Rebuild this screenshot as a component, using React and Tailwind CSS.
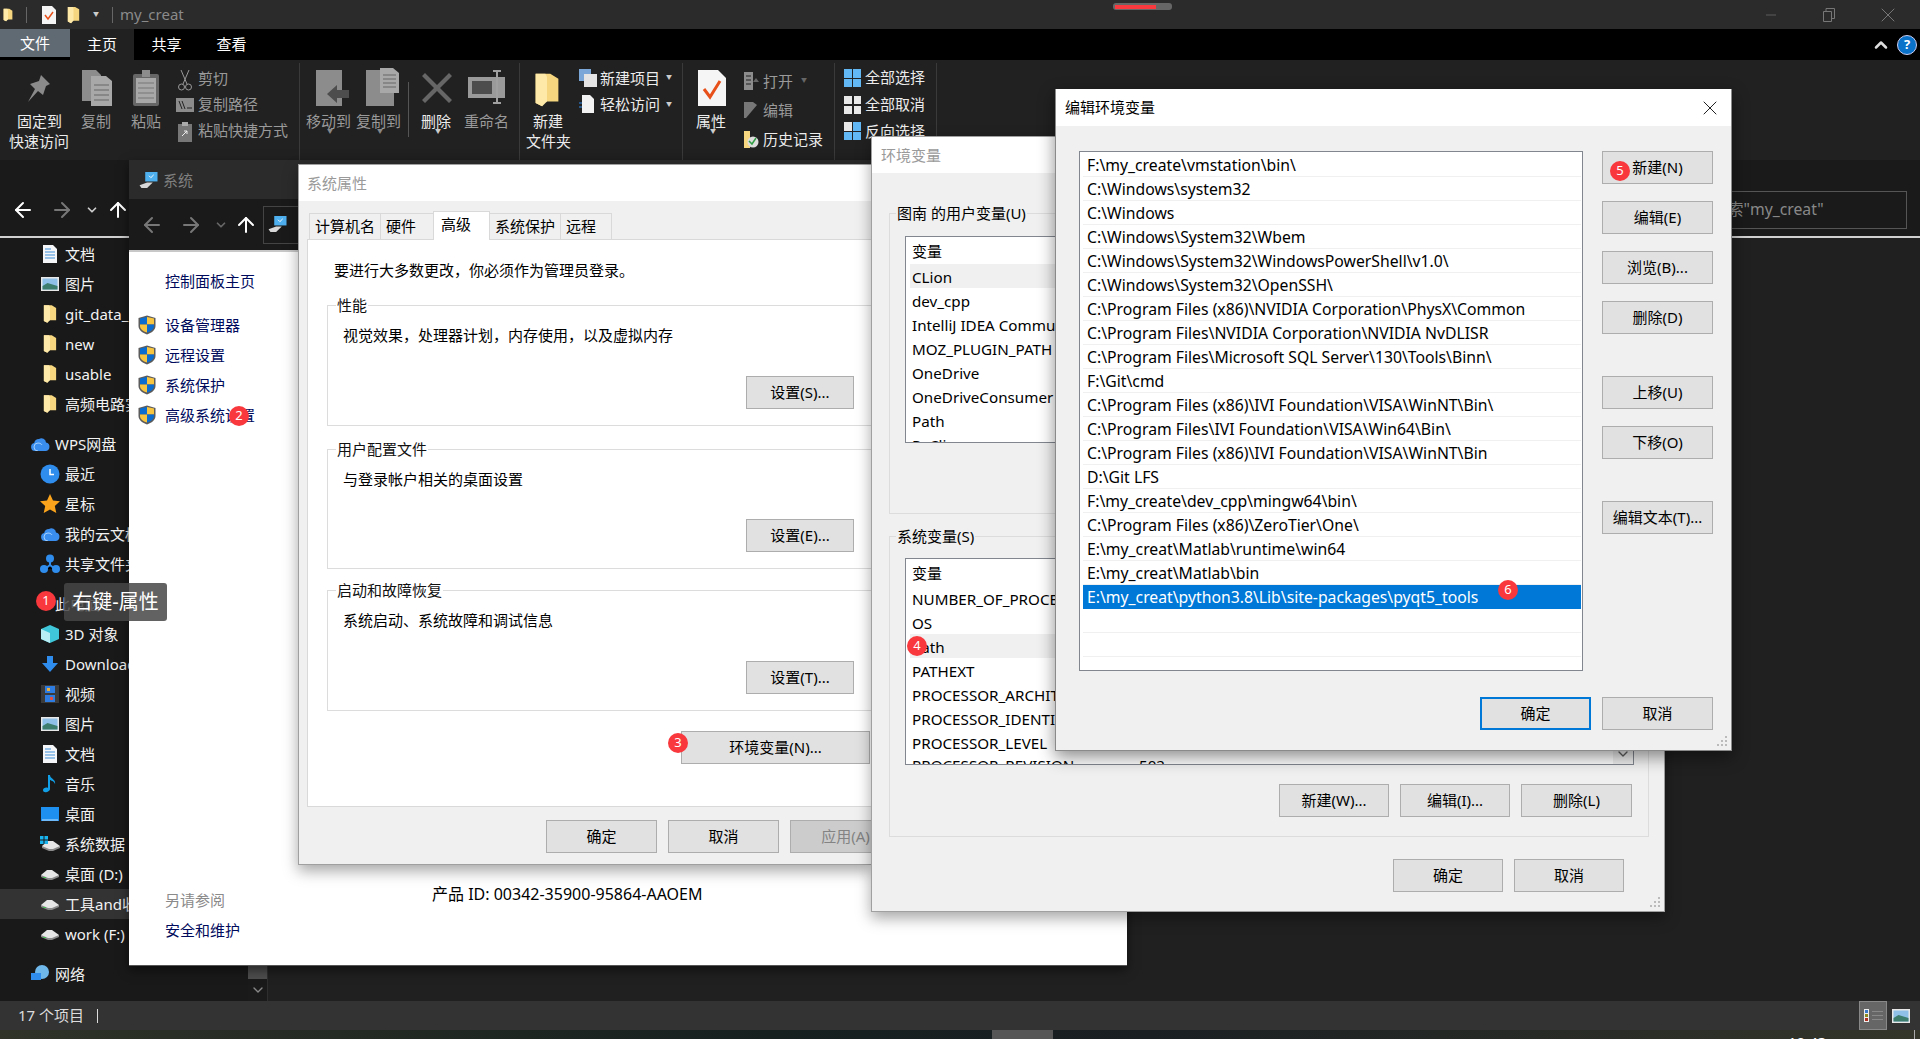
import { ChevronDown, ChevronUp, ArrowLeft, ArrowRight, ArrowUp, X, Minus } from 'lucide-react';

const FONT = '[font-family:"Noto_Sans","Noto_Sans_CJK_SC",sans-serif]';

const Badge = ({ n, className }) => (
  <span className={`absolute z-10 flex h-5 w-5 items-center justify-center rounded-full bg-[#f8383c] text-[13px] text-white ${className}`}>{n}</span>
);

const Folder = ({ className = '' }) => (
  <svg viewBox="0 0 16 22" className={className}>
    <path d="M1 1h9l5 3v14l-9 0-1 3-4-2z" fill="#f6d77f" />
    <path d="M1 1h6l1 2v15l-3 3-4-2z" fill="#ffe9a8" />
  </svg>
);

const Shield = () => (
  <svg viewBox="0 0 18 20" className="h-5 w-[18px] shrink-0">
    <path d="M9 0.5 17.5 3v8c0 4-4 7-8.500 8.500C4.500 18 .5 15 .5 11V3z" fill="#5c5c5c" />
    <path d="M9 2v7.500H2V3.500z" fill="#0a6ccf" />
    <path d="M9 2l7 1.500v6H9z" fill="#f7c540" />
    <path d="M2 9.500h7v8C5 16.500 2 14 2 11z" fill="#f7c540" />
    <path d="M9 9.500h7V11c0 3-3 5.500-7 6.500z" fill="#0a6ccf" />
  </svg>
);

const Drive = () => (
  <svg viewBox="0 0 18 11" className="h-[11px] w-[18px]">
    <path d="M0 6v2l7 3h4l7-3V6z" fill="#8a8a8a" />
    <path d="M0 6l6-5h5l7 5-7 3H7z" fill="#e6e6e6" />
    <path d="M2 8h3v1H2z" fill="#3fb950" />
  </svg>
);

const PathItem = ({ children, selected }) => (
  <div className={`flex h-6 items-center border-b pt-[3px] pl-1 text-[15.75px] whitespace-nowrap ${selected ? 'border-[#0078d7] bg-[#0078d7] text-white' : 'border-[#f0f0f0] text-black'}`}>
    {children}
  </div>
);

const WinButton = ({ children, className = 'w-[111px]', disabled, focused }) => (
  <div className={`flex h-[33px] shrink-0 items-center justify-center text-[15px] ${focused ? 'border-2 border-[#0078d7]' : 'border border-[#adadad]'} ${disabled ? 'bg-[#cccccc] text-[#838383]' : 'bg-[#e1e1e1] text-black'} ${className}`}>
    {children}
  </div>
);

const GroupBox = ({ title, className, children }) => (
  <fieldset className={`w-[600px] border border-[#dcdcdc] px-[15px] ${className}`}>
    <legend className="-ml-[7px] px-[1px] text-[15px] leading-[18px] text-[#111]">{title}</legend>
    {children}
  </fieldset>
);

const RibbonLabel = ({ children, className, dim }) => (
  <span className={`text-[15px] leading-5 whitespace-nowrap ${dim ? 'text-[#9a9a9a]' : 'text-[#ececec]'} ${className}`}>{children}</span>
);

const navItems = [
  { label: '文档', icon: 'doc' }, { label: '图片', icon: 'pic' }, { label: 'git_data_', icon: 'folder' },
  { label: 'new', icon: 'folder' }, { label: 'usable', icon: 'folder' }, { label: '高频电路实', icon: 'folder' },
];
const wpsItems = [
  { label: '最近', icon: 'clock' }, { label: '星标', icon: 'star' }, { label: '我的云文档', icon: 'cloud' }, { label: '共享文件夹', icon: 'share' },
];
const pcItems = [
  { label: '3D 对象', icon: 'cube' }, { label: 'Downloads', icon: 'down' }, { label: '视频', icon: 'video' },
  { label: '图片', icon: 'pic' }, { label: '文档', icon: 'doc' }, { label: '音乐', icon: 'music' },
  { label: '桌面', icon: 'desk' }, { label: '系统数据', icon: 'sysdrive' }, { label: '桌面 (D:)', icon: 'drive' },
  { label: '工具and收', icon: 'drive', hover: true }, { label: 'work (F:)', icon: 'drive' },
];

const NavIcon = ({ kind }) => {
  if (kind === 'folder') return <Folder className="h-[22px] w-[14px]" />;
  if (kind === 'drive') return <Drive />;
  if (kind === 'sysdrive') return (
    <svg viewBox="0 0 20 16" className="h-4 w-5">
      <path d="M2 7v2l7 3h4l7-3V7z" transform="translate(0 3)" fill="#8a8a8a" />
      <path d="M2 10l6-5h5l7 5-7 3H9z" fill="#e6e6e6" />
      <path d="M0 0h3.500v3.500H0zM4.500 0H8v3.500H4.500zM0 4.500h3.500V8H0zM4.500 4.500H8V8H4.500z" fill="#18b4f0" />
    </svg>
  );
  if (kind === 'doc') return (
    <svg viewBox="0 0 14 18" className="h-[18px] w-[14px]"><path d="M0 0h10l4 4v14H0z" fill="#f4f6f8" /><path d="M2 4h6M2 7h10M2 10h10M2 13h10" stroke="#3f8fd8" strokeWidth="1" /></svg>
  );
  if (kind === 'pic') return (
    <svg viewBox="0 0 18 14" className="h-3.5 w-[18px]"><rect width="18" height="14" fill="#e8e8e8" /><rect x="1.500" y="1.500" width="15" height="11" fill="#8fc0e8" /><path d="M1.500 9l5-3 10 3v3.500h-15z" fill="#3d7d6e" /></svg>
  );
  if (kind === 'clock') return (
    <svg viewBox="0 0 20 20" className="h-5 w-5"><circle cx="10" cy="10" r="9.500" fill="#2f8dee" /><path d="M10 5v5.500h4" stroke="#fff" strokeWidth="1.500" fill="none" /></svg>
  );
  if (kind === 'star') return (
    <svg viewBox="0 0 20 20" className="h-5 w-5"><path d="M10 0l3 6.500 7 .8-5.200 4.700 1.500 7L10 15.500 3.700 19l1.500-7L0 7.300l7-.8z" fill="#fca51c" /></svg>
  );
  if (kind === 'cloud') return (
    <svg viewBox="0 0 20 14" className="h-3.5 w-5"><path d="M5 14a4 4 0 0 1-.8-7.900A5 5 0 0 1 9 2a4.500 4.500 0 0 1 7 3.500A4.300 4.300 0 0 1 15.500 14z" fill="#3a8eee" /><path d="M8 14a4 4 0 0 1 0-8c3 0 4 2 4 2" stroke="#bfe0ff" fill="none" strokeWidth=".8" /></svg>
  );
  if (kind === 'share') return (
    <svg viewBox="0 0 20 20" className="h-5 w-5"><path d="M10 5v6M5 15l5-4 5 4" stroke="#2f8dee" strokeWidth="2" /><circle cx="10" cy="4.500" r="4" fill="#2f8dee" /><circle cx="4" cy="15" r="4" fill="#2f8dee" /><circle cx="16" cy="15" r="4" fill="#2f8dee" /></svg>
  );
  if (kind === 'cube') return (
    <svg viewBox="0 0 18 18" className="h-[18px] w-[18px]"><path d="M9 0l9 4v10l-9 4-9-4V4z" fill="#3fc6d8" /><path d="M0 4l9 4v10l-9-4z" fill="#b9eef4" /></svg>
  );
  if (kind === 'down') return (
    <svg viewBox="0 0 16 16" className="h-4 w-4"><path d="M5 0h6v7h5l-8 9-8-9h5z" fill="#2f8dee" /></svg>
  );
  if (kind === 'video') return (
    <svg viewBox="0 0 18 18" className="h-[18px] w-[18px]"><rect width="18" height="18" fill="#3a3a3a" /><rect x="4" y="1" width="10" height="7" fill="#2f7ce0" /><rect x="4" y="10" width="10" height="7" fill="#2f7ce0" /><rect x="6" y="3" width="3" height="3" fill="#e9b040" /><rect x="9" y="12" width="3" height="3" fill="#e05040" /></svg>
  );
  if (kind === 'music') return (
    <svg viewBox="0 0 14 18" className="h-[18px] w-[14px]"><path d="M5 0h2c0 4 6 4 5 9-1-3-3-3-5-4v9c0 3-7 5-7 1 0-2 3-3 5-2z" fill="#11a0e8" /></svg>
  );
  if (kind === 'desk') return (
    <svg viewBox="0 0 18 14" className="h-3.5 w-[18px]"><rect width="18" height="14" fill="#1e90f0" /><path d="M1 13h16" stroke="#bfe2ff" /></svg>
  );
  return null;
};

const NavRow = ({ item, className = '' }) => (
  <div className={`flex h-[30px] items-center text-[15px] text-[#f2f2f2] ${item.hover ? 'bg-[#333333]' : ''} ${className}`}>
    <span className="flex w-[24px] justify-center"><NavIcon kind={item.icon} /></span>
    <span className="ml-[3px] whitespace-nowrap">{item.label}</span>
  </div>
);

const RibbonGroupLine = ({ className }) => <div className={`absolute top-[3px] h-[97px] w-px bg-[#3a3a3a] ${className}`} />;

const Ribbon = () => (
  <div className="relative h-[100px] bg-[#212121]">
    <RibbonGroupLine className="left-[299px]" />
    <RibbonGroupLine className="left-[519px]" />
    <RibbonGroupLine className="left-[682px]" />
    <RibbonGroupLine className="left-[834px]" />
    <RibbonGroupLine className="left-[936px]" />
    <svg viewBox="0 0 26 27" className="absolute top-[15px] left-[26px] h-[27px] w-[26px]"><path d="M15 0l9 9-4 2-3 9-5-4-10 11 7-13-5-5 9-3z" fill="#8a8a8a" /></svg>
    <svg viewBox="0 0 30 36" className="absolute top-[10px] left-[82px] h-[36px] w-[30px]"><path d="M0 0h14l5 5v26H0z" fill="#8c8c8c" /><path d="M9 6h15l6 5v25H9z" fill="#a8a8a8" /><path d="M12 15h15M12 20h15M12 25h15M12 30h15" stroke="#666" /></svg>
    <svg viewBox="0 0 26 36" className="absolute top-[10px] left-[133px] h-[36px] w-[26px]"><rect y="4" width="26" height="32" rx="2" fill="#666" /><rect x="3" y="8" width="20" height="25" fill="#a8a8a8" /><rect x="9" y="0" width="8" height="7" fill="#8c8c8c" /><path d="M5 13h16M5 18h16M5 23h16M5 28h16" stroke="#777" /></svg>
    <svg viewBox="0 0 14 22" className="absolute top-[10px] left-[178px] h-[22px] w-[14px]"><path d="M3 0l6 14M11 0L5 14" stroke="#999" strokeWidth="1" fill="none" /><circle cx="3.500" cy="17" r="3" stroke="#999" fill="none" /><circle cx="10.500" cy="17" r="3" stroke="#999" fill="none" /></svg>
    <svg viewBox="0 0 18 14" className="absolute top-[38px] left-[176px] h-[14px] w-[18px]"><rect width="18" height="14" fill="#8c8c8c" /><path d="M3 3l3 8M6 3l3 8M11 10h5" stroke="#222" /></svg>
    <svg viewBox="0 0 14 20" className="absolute top-[62px] left-[178px] h-[20px] w-[14px]"><rect y="2" width="14" height="18" fill="#777" /><rect x="4" y="0" width="6" height="4" fill="#aaa" /><path d="M4 14l5-5M6 9h3v3" stroke="#eee" fill="none" /></svg>
    <RibbonLabel className="absolute top-[51px] left-[17px]">固定到</RibbonLabel>
    <RibbonLabel className="absolute top-[71px] left-[9px]">快速访问</RibbonLabel>
    <RibbonLabel dim className="absolute top-[51px] left-[81px]">复制</RibbonLabel>
    <RibbonLabel dim className="absolute top-[51px] left-[131px]">粘贴</RibbonLabel>
    <RibbonLabel dim className="absolute top-[8px] left-[198px]">剪切</RibbonLabel>
    <RibbonLabel dim className="absolute top-[34px] left-[198px]">复制路径</RibbonLabel>
    <RibbonLabel dim className="absolute top-[60px] left-[198px]">粘贴快捷方式</RibbonLabel>

    <svg viewBox="0 0 33 36" className="absolute top-[10px] left-[316px] h-[36px] w-[33px]"><rect width="26" height="36" fill="#8c8c8c" /><path d="M33 20H21v-5L11 24l10 9v-5h12z" fill="#4d4d4d" /></svg>
    <svg viewBox="0 0 33 38" className="absolute top-[8px] left-[366px] h-[38px] w-[33px]"><rect y="2" width="28" height="36" fill="#8c8c8c" /><path d="M14 0h13l6 5v20H14z" fill="#a8a8a8" /><path d="M17 7h13M17 11h13M17 15h13M17 19h13" stroke="#666" /></svg>
    <div className="absolute top-[22px] left-[408px] h-[55px] w-px bg-[#555]" />
    <svg viewBox="0 0 30 30" className="absolute top-[13px] left-[422px] h-[30px] w-[30px]"><path d="M3 0l12 12L27 0l3 3-12 12 12 12-3 3-12-12L3 30l-3-3 12-12L0 3z" fill="#666" /></svg>
    <svg viewBox="0 0 37 34" className="absolute top-[10px] left-[468px] h-[34px] w-[37px]"><rect y="7" width="37" height="21" fill="#9a9a9a" /><rect x="4" y="11" width="20" height="13" fill="#4d4d4d" /><path d="M29 1v32M25 1h8M25 33h8" stroke="#a0a0a0" strokeWidth="2" /></svg>
    <RibbonLabel dim className="absolute top-[51px] left-[306px]">移动到</RibbonLabel>
    <RibbonLabel dim className="absolute top-[51px] left-[356px]">复制到</RibbonLabel>
    <RibbonLabel className="absolute top-[51px] left-[421px] text-[#c8c8c8]">删除</RibbonLabel>
    <RibbonLabel dim className="absolute top-[51px] left-[464px]">重命名</RibbonLabel>
    <span className="absolute top-[67px] left-[327px] text-[6px] text-[#888]">▼</span>
    <span className="absolute top-[67px] left-[377px] text-[6px] text-[#888]">▼</span>
    <span className="absolute top-[67px] left-[435px] text-[6px] text-[#ccc]">▼</span>

    <Folder className="absolute top-[12px] left-[534px] h-[36px] w-[26px]" />
    <svg viewBox="0 0 18 18" className="absolute top-[9px] left-[579px] h-[18px] w-[18px]"><rect width="12" height="12" fill="#7aa7d8" /><rect x="5" y="5" width="13" height="13" fill="#e4e4e4" /></svg>
    <svg viewBox="0 0 15 18" className="absolute top-[35px] left-[579px] h-[18px] w-[15px]"><path d="M3 0h8l4 4v14H3z" fill="#f2f2f2" /><path d="M0 8h3M0 12h3" stroke="#2f8dee" /></svg>
    <RibbonLabel className="absolute top-[51px] left-[533px]">新建</RibbonLabel>
    <RibbonLabel className="absolute top-[71px] left-[526px]">文件夹</RibbonLabel>
    <RibbonLabel className="absolute top-[8px] left-[600px]">新建项目</RibbonLabel>
    <RibbonLabel className="absolute top-[34px] left-[600px]">轻松访问</RibbonLabel>
    <span className="absolute top-[13px] left-[666px] text-[6px] text-[#ccc]">▼</span>
    <span className="absolute top-[40px] left-[666px] text-[6px] text-[#ccc]">▼</span>

    <svg viewBox="0 0 28 36" className="absolute top-[10px] left-[698px] h-[36px] w-[28px]"><path d="M0 0h20l8 8v28H0z" fill="#f5f5f5" /><path d="M6 19l6 8 10-16" stroke="#e8501a" strokeWidth="3" fill="none" /></svg>
    <svg viewBox="0 0 15 18" className="absolute top-[12px] left-[744px] h-[18px] w-[15px]"><rect width="9" height="18" fill="#8c8c8c" /><path d="M2 4h5M2 8h5M2 12h5" stroke="#444" strokeWidth="1.500" /><path d="M9 10h6l-3 -4z" fill="#666" /></svg>
    <svg viewBox="0 0 15 16" className="absolute top-[42px] left-[744px] h-[16px] w-[15px]"><path d="M0 0h9l4 3L2 16H0z" fill="#777" /></svg>
    <svg viewBox="0 0 15 17" className="absolute top-[71px] left-[744px] h-[17px] w-[15px]"><path d="M0 0h6v17H0z" fill="#f6d77f" /><circle cx="9" cy="11" r="5.500" fill="#ddd" /><path d="M5 10l3 3 4-6" stroke="#2f9e44" strokeWidth="1.500" fill="none" /></svg>
    <RibbonLabel className="absolute top-[51px] left-[696px]">属性</RibbonLabel>
    <span className="absolute top-[67px] left-[710px] text-[6px] text-[#ccc]">▼</span>
    <RibbonLabel dim className="absolute top-[11px] left-[763px]">打开</RibbonLabel>
    <span className="absolute top-[16px] left-[801px] text-[6px] text-[#666]">▼</span>
    <RibbonLabel dim className="absolute top-[40px] left-[763px]">编辑</RibbonLabel>
    <RibbonLabel className="absolute top-[69px] left-[763px]">历史记录</RibbonLabel>

    <div className="absolute top-[9px] left-[844px] grid h-[18px] w-[17px] grid-cols-2 gap-px">
      <span className="bg-[#62b8f4]" /><span className="bg-[#62b8f4]" /><span className="bg-[#62b8f4]" /><span className="bg-[#62b8f4]" />
    </div>
    <div className="absolute top-[36px] left-[844px] grid h-[18px] w-[17px] grid-cols-2 gap-[2px]">
      <span className="bg-[#e8e8e8]" /><span className="bg-[#e8e8e8]" /><span className="bg-[#e8e8e8]" /><span className="bg-[#e8e8e8]" />
    </div>
    <div className="absolute top-[62px] left-[844px] grid h-[18px] w-[17px] grid-cols-2 gap-px">
      <span className="bg-[#e8e8e8]" /><span className="bg-[#62b8f4]" /><span className="bg-[#62b8f4]" /><span className="bg-[#62b8f4]" />
    </div>
    <RibbonLabel className="absolute top-[7px] left-[865px]">全部选择</RibbonLabel>
    <RibbonLabel className="absolute top-[34px] left-[865px]">全部取消</RibbonLabel>
    <RibbonLabel className="absolute top-[61px] left-[865px]">反向选择</RibbonLabel>
  </div>
);

const PcIcon = () => (
  <svg viewBox="0 0 20 18" className="h-[17px] w-[20px]"><rect x="6" y="0" width="13" height="10" fill="#4fb0ef" /><path d="M10 4l2 2 3-3" stroke="#fff" fill="none" /><path d="M0 14l8-3h6l-6 6H2z" fill="#d8d8d8" /></svg>
);

const SystemWindow = () => (
  <div className="absolute top-[160px] left-[129px] flex h-[806px] w-[998px] flex-col border-b border-[#555] shadow-[0_4px_10px_rgba(0,0,0,.5)]">
    <div className="flex h-[39px] items-center gap-[4px] bg-[#2b2b2b] pt-[2px] pl-[10px] text-[15px] text-[#7f7f7f]">
      <PcIcon />
      <span>系统</span>
    </div>
    <div className="flex h-[51px] items-center bg-[#1a1a1a] pl-[11px]">
      <ArrowLeft className="h-6 w-6 text-[#777]" />
      <ArrowRight className="ml-[15px] h-6 w-6 text-[#777]" />
      <ChevronDown className="ml-[11px] h-[14px] w-[14px] text-[#666]" strokeWidth={3} />
      <ArrowUp className="ml-[6px] h-6 w-6 text-white" />
      <div className="ml-[5px] flex h-[38px] flex-1 items-center border border-[#444] pl-[4px]">
        <PcIcon />
      </div>
    </div>
    <div className="h-[2px] bg-[#c8c8c8]" />
    <div className="flex flex-1 flex-col bg-white pl-[36px] text-[15px] text-[#000a5c]">
      <div className="mt-[19px] leading-5">控制面板主页</div>
      <div className="mt-[24px] flex flex-col gap-[10px]">
        {['设备管理器', '远程设置', '系统保护', '高级系统设置'].map(t => (
          <div key={t} className="-ml-[27px] flex h-5 items-center gap-[9px]"><Shield /><span>{t}</span></div>
        ))}
      </div>
      <div className="mt-auto mb-[25px]">
        <div className="leading-5 text-[#8a8a8a]">另请参阅</div>
        <div className="mt-[10px] leading-5">安全和维护</div>
      </div>
    </div>
    <div className="absolute top-[724px] left-[303px] text-[16px] leading-5 whitespace-nowrap text-black">产品 ID: 00342-35900-95864-AAOEM</div>
  </div>
);

const SystemProperties = () => (
  <div className="absolute top-[164px] left-[298px] flex h-[701px] w-[574px] flex-col overflow-hidden border border-[#a0a0a0] shadow-[0_6px_14px_rgba(0,0,0,.35)]">
    <div className="flex h-[36px] items-center bg-white pl-[8px] text-[15px] text-[#9a9a9a]">系统属性</div>
    <div className="flex flex-1 flex-col bg-[#f0f0f0] pl-[8px]">
      <div className="flex h-[38px] items-end pl-[2px] text-[15px] text-black">
        {[['计算机名', 'w-[71px]'], ['硬件', 'w-[53px]']].map(([t, w]) => (
          <div key={t} className={`flex h-[26px] items-center border border-r-0 border-b-0 border-[#d9d9d9] bg-[#f0f0f0] pl-[5px] ${w}`}>{t}</div>
        ))}
        <div className="relative z-10 -mb-px flex h-[29px] w-[57px] items-start border border-b-0 border-[#d9d9d9] bg-white pt-px pl-[7px]">高级</div>
        {[['系统保护', 'w-[71px]'], ['远程', 'w-[51px]']].map(([t, w]) => (
          <div key={t} className={`flex h-[26px] items-center border border-b-0 border-l-0 border-[#d9d9d9] bg-[#f0f0f0] pl-[5px] ${w}`}>{t}</div>
        ))}
      </div>
      <div className="h-[568px] w-[640px] border border-[#d9d9d9] bg-white pl-[19px]">
        <div className="mt-[20px] ml-[7px] text-[15px] leading-5 text-black">要进行大多数更改，你必须作为管理员登录。</div>
        <GroupBox title="性能" className="mt-[16px] h-[130px]">
          <div className="mt-[11px] text-[15px] leading-5 text-black">视觉效果，处理器计划，内存使用，以及虚拟内存</div>
          <div className="mt-[31px] ml-[403px]"><WinButton className="w-[108px]">设置(S)...</WinButton></div>
        </GroupBox>
        <GroupBox title="用户配置文件" className="mt-[14px] h-[129px]">
          <div className="mt-[11px] text-[15px] leading-5 text-black">与登录帐户相关的桌面设置</div>
          <div className="mt-[30px] ml-[403px]"><WinButton className="w-[108px]">设置(E)...</WinButton></div>
        </GroupBox>
        <GroupBox title="启动和故障恢复" className="mt-[12px] h-[130px]">
          <div className="mt-[11px] text-[15px] leading-5 text-black">系统启动、系统故障和调试信息</div>
          <div className="mt-[31px] ml-[403px]"><WinButton className="w-[108px]">设置(T)...</WinButton></div>
        </GroupBox>
        <div className="mt-[20px] ml-[354px]"><WinButton className="w-[189px]">环境变量(N)...</WinButton></div>
      </div>
      <div className="mt-[13px] ml-[239px] flex gap-[11px]">
        <WinButton>确定</WinButton>
        <WinButton>取消</WinButton>
        <WinButton disabled>应用(A)</WinButton>
      </div>
    </div>
  </div>
);

const userVars = ['CLion', 'dev_cpp', 'IntelliJ IDEA Community', 'MOZ_PLUGIN_PATH', 'OneDrive', 'OneDriveConsumer', 'Path', 'PyClion'];
const sysVars = ['NUMBER_OF_PROCESSORS', 'OS', 'Path', 'PATHEXT', 'PROCESSOR_ARCHITECTURE', 'PROCESSOR_IDENTIFIER', 'PROCESSOR_LEVEL'];

const VarList = ({ rows, hot, className, children }) => (
  <div className={`relative overflow-hidden border border-[#82878f] bg-white text-[15.2px] text-black ${className}`}>
    <div className="flex h-[27px] items-center pt-[2px] pl-[6px] text-[15px]">变量</div>
    {rows.map(r => (
      <div key={r} className={`ml-[4px] flex h-6 items-center pt-[2px] pl-[2px] whitespace-nowrap ${r === hot ? 'bg-[#f0f0f0]' : ''}`}>{r}</div>
    ))}
    {children}
  </div>
);

const EnvWindow = () => (
  <div className="absolute top-[136px] left-[871px] flex h-[776px] w-[794px] flex-col border border-[#a0a0a0] shadow-[0_6px_14px_rgba(0,0,0,.35)]">
    <div className="flex h-[36px] items-center bg-white pl-[9px] text-[15px] text-[#9a9a9a]">环境变量</div>
    <div className="flex flex-1 flex-col bg-[#f0f0f0] pl-[17px]">
      <fieldset className="mt-[31px] h-[310px] w-[760px] border border-[#dcdcdc] pl-[15px]">
        <legend className="-ml-[9px] px-[1px] text-[15px] leading-[18px] text-black">图南 的用户变量(U)</legend>
        <VarList rows={userVars} hot="CLion" className="mt-[14px] h-[207px] w-[729px]" />
      </fieldset>
      <fieldset className="mt-[13px] h-[310px] w-[760px] border border-[#dcdcdc] pl-[15px]">
        <legend className="-ml-[9px] px-[1px] text-[15px] leading-[18px] text-black">系统变量(S)</legend>
        <VarList rows={sysVars} hot="Path" className="mt-[13px] h-[207px] w-[729px]">
          <div className="absolute top-[195px] left-[6px] whitespace-nowrap">PROCESSOR_REVISION</div>
          <div className="absolute top-[195px] left-[233px] whitespace-nowrap">502</div>
          <div className="absolute top-0 right-0 flex h-full w-5 items-end justify-center bg-[#f0f0f0] pb-[2px]"><ChevronDown className="h-4 w-4 text-[#606060]" /></div>
        </VarList>
        <div className="mt-[19px] ml-[374px] flex gap-[11px]">
          <WinButton className="w-[110px]">新建(W)...</WinButton>
          <WinButton className="w-[110px]">编辑(I)...</WinButton>
          <WinButton className="w-[111px]">删除(L)</WinButton>
        </div>
      </fieldset>
      <div className="mt-[22px] ml-[504px] flex gap-[11px]">
        <WinButton className="w-[110px]">确定</WinButton>
        <WinButton className="w-[110px]">取消</WinButton>
      </div>
    </div>
    <svg viewBox="0 0 12 12" className="absolute right-[3px] bottom-[3px] h-3 w-3"><path d="M9 1h2v2H9zM5 5h2v2H5zM9 5h2v2H9zM1 9h2v2H1zM5 9h2v2H5zM9 9h2v2H9z" fill="#bbb" /></svg>
  </div>
);

const pathRows = [
  'F:\\my_create\\vmstation\\bin\\', 'C:\\Windows\\system32', 'C:\\Windows', 'C:\\Windows\\System32\\Wbem',
  'C:\\Windows\\System32\\WindowsPowerShell\\v1.0\\', 'C:\\Windows\\System32\\OpenSSH\\',
  'C:\\Program Files (x86)\\NVIDIA Corporation\\PhysX\\Common', 'C:\\Program Files\\NVIDIA Corporation\\NVIDIA NvDLISR',
  'C:\\Program Files\\Microsoft SQL Server\\130\\Tools\\Binn\\', 'F:\\Git\\cmd',
  'C:\\Program Files (x86)\\IVI Foundation\\VISA\\WinNT\\Bin\\', 'C:\\Program Files\\IVI Foundation\\VISA\\Win64\\Bin\\',
  'C:\\Program Files (x86)\\IVI Foundation\\VISA\\WinNT\\Bin', 'D:\\Git LFS', 'F:\\my_create\\dev_cpp\\mingw64\\bin\\',
  'C:\\Program Files (x86)\\ZeroTier\\One\\', 'E:\\my_creat\\Matlab\\runtime\\win64', 'E:\\my_creat\\Matlab\\bin',
];

const EditDialog = () => (
  <div className="absolute top-[89px] left-[1055px] flex h-[662px] w-[677px] flex-col border border-t-0 border-[#8a8a8a] shadow-[0_6px_16px_rgba(0,0,0,.45)]">
    <div className="flex h-[37px] items-center justify-between bg-white pr-[9px] pl-[9px] text-[15px] text-black">
      <span>编辑环境变量</span>
      <X className="h-6 w-6 text-[#222]" strokeWidth={1} />
    </div>
    <div className="flex flex-1 flex-col bg-[#f0f0f0] pt-[25px] pl-[23px]">
      <div className="flex">
        <div className="h-[520px] w-[504px] overflow-hidden border border-[#82878f] bg-white py-[1px] pr-[1px] pl-[3px]">
          {pathRows.map(r => <PathItem key={r}>{r}</PathItem>)}
          <PathItem selected>E:\my_creat\python3.8\Lib\site-packages\pyqt5_tools</PathItem>
          <PathItem />
          <PathItem />
        </div>
        <div className="ml-[19px] flex flex-col">
          <WinButton>新建(N)</WinButton>
          <div className="mt-[17px]"><WinButton>编辑(E)</WinButton></div>
          <div className="mt-[17px]"><WinButton>浏览(B)...</WinButton></div>
          <div className="mt-[17px]"><WinButton>删除(D)</WinButton></div>
          <div className="mt-[42px]"><WinButton>上移(U)</WinButton></div>
          <div className="mt-[17px]"><WinButton>下移(O)</WinButton></div>
          <div className="mt-[42px]"><WinButton>编辑文本(T)...</WinButton></div>
        </div>
      </div>
      <div className="mt-[26px] ml-[401px] flex gap-[11px]">
        <WinButton focused>确定</WinButton>
        <WinButton>取消</WinButton>
      </div>
    </div>
    <svg viewBox="0 0 12 12" className="absolute right-[3px] bottom-[3px] h-3 w-3"><path d="M9 1h2v2H9zM5 5h2v2H5zM9 5h2v2H9zM1 9h2v2H1zM5 9h2v2H5zM9 9h2v2H9z" fill="#bbb" /></svg>
  </div>
);

export default function App() {
  return (
    <div className={`relative h-[1039px] w-[1920px] overflow-hidden bg-[#202020] ${FONT}`}>
      {/* explorer behind everything */}
      <div className="flex h-[29px] items-center bg-[#2b2b2b]">
        <Folder className="ml-[3px] h-[20px] w-[10px]" />
        <div className="ml-[13px] h-[16px] w-px bg-[#666]" />
        <svg viewBox="0 0 14 18" className="ml-[15px] h-[18px] w-[14px]"><path d="M0 0h10l4 4v14H0z" fill="#f5f5f5" /><path d="M3 9l3 4 5-7" stroke="#e8501a" strokeWidth="1.500" fill="none" /></svg>
        <Folder className="ml-[11px] h-[18px] w-[13px]" />
        <span className="ml-[13px] text-[6px] text-[#ccc]">▼</span>
        <div className="ml-[13px] h-[16px] w-px bg-[#666]" />
        <span className="ml-[7px] text-[15px] text-[#8a8a8a]">my_creat</span>
        <div className="ml-auto flex items-center gap-[41px] pr-[20px]">
          <Minus className="mr-[3px] h-4 w-4 text-[#777]" strokeWidth={1} />
          <svg viewBox="0 0 12 14" className="h-[14px] w-[12px]"><path d="M.5 3.500h8v10h-8zM3 3.500v-3h8.500v10H8.500" stroke="#777" fill="none" /></svg>
          <X className="h-6 w-6 text-[#777]" strokeWidth={1} />
        </div>
      </div>
      <div className="flex h-[31px] items-stretch bg-black text-[15px] text-white">
        <div className="flex h-[28px] w-[70px] items-center justify-center bg-[#5f6a73]">文件</div>
        <div className="flex w-[64px] items-center justify-center bg-[#212121]">主页</div>
        <div className="flex w-[65px] items-center justify-center">共享</div>
        <div className="flex w-[65px] items-center justify-center">查看</div>
        <div className="ml-auto flex items-center gap-[6px] pr-[3px]">
          <ChevronUp className="h-5 w-5 text-[#ddd]" strokeWidth={3} />
          <span className="flex h-5 w-5 items-center justify-center rounded-full border border-[#cce] bg-[#0a72c8] text-[13px] font-bold">?</span>
        </div>
      </div>
      <Ribbon />
      <div className="flex h-[76px] items-center bg-[#1a1a1a] pt-[24px] pl-[11px]">
        <ArrowLeft className="h-6 w-6 text-white" />
        <ArrowRight className="ml-[15px] h-6 w-6 text-[#777]" />
        <ChevronDown className="ml-[11px] h-[14px] w-[14px] text-[#ccc]" strokeWidth={3} />
        <ArrowUp className="ml-[7px] h-6 w-6 text-white" />
        <div className="mr-[13px] ml-auto flex h-[38px] w-[220px] items-center border border-[#555] pl-[24px] text-[15.75px] text-[#888]">搜索"my_creat"</div>
      </div>
      <div className="h-[2px] bg-[#d0d0d0]" />
      <div className="flex h-[763px]">
        <div className="relative w-[248px] shrink-0 bg-[#191919] pt-[1px] pl-[38px]">
          {navItems.map(i => <NavRow key={i.label} item={i} />)}
          <div className="mt-[10px] -ml-[8px] flex h-[30px] items-center text-[15px] text-[#f2f2f2]">
            <span className="flex w-[20px] justify-center"><NavIcon kind="cloud" /></span>
            <span className="ml-[5px]">WPS网盘</span>
          </div>
          {wpsItems.map(i => <NavRow key={i.label} item={i} />)}
          <div className="mt-[10px] -ml-[8px] flex h-[30px] items-center pl-[25px] text-[15px] text-[#f2f2f2]">此电脑</div>
          {pcItems.map(i => <NavRow key={i.label} item={i} className={i.hover ? '-ml-[38px] pl-[38px]' : ''} />)}
          <div className="mt-[10px] -ml-[8px] flex h-[30px] items-center text-[15px] text-[#f2f2f2]">
            <span className="flex w-[20px] justify-center"><svg viewBox="0 0 18 18" className="h-[18px] w-[18px]"><circle cx="11" cy="7" r="7" fill="#6fb8ec" /><rect y="8" width="10" height="7" fill="#2f8dee" /></svg></span>
            <span className="ml-[5px]">网络</span>
          </div>
        </div>
        <div className="flex w-[19px] shrink-0 flex-col justify-end bg-[#1a1a1a]">
          <div className="h-[30px] bg-[#4d4d4d]" />
          <div className="flex h-[22px] items-center justify-center"><ChevronDown className="h-4 w-4 text-[#888]" /></div>
        </div>
        <div className="w-px bg-[#2e2e2e]" />
        <div className="flex-1" />
      </div>
      <div className="flex h-[29px] items-center bg-[#333333] pl-[18px] text-[15px] text-[#dcdcdc]">
        <span>17 个项目</span>
        <span className="ml-[13px] h-[14px] w-px bg-[#ddd]" />
        <div className="ml-auto flex h-full items-center pr-[10px]">
          <div className="flex h-full w-[28px] items-center justify-center gap-[3px] border border-[#888] bg-[#666]">
            <div className="flex flex-col gap-px bg-[#eee] p-px">
              <span className="h-[3px] w-[3px] bg-[#3a78c8]" /><span className="h-[3px] w-[3px] bg-[#8a8a20]" /><span className="h-[3px] w-[3px] bg-[#b03020]" />
            </div>
            <div className="flex flex-col gap-[3px]">
              <span className="h-px w-[11px] bg-[#888]" /><span className="h-px w-[11px] bg-[#888]" /><span className="h-px w-[11px] bg-[#888]" />
            </div>
          </div>
          <div className="ml-[5px]"><NavIcon kind="pic" /></div>
        </div>
      </div>
      <div className="relative h-[9px] overflow-hidden bg-[linear-gradient(90deg,#2f3328,#16201f_40%,#1a1f22_60%,#34362a)]">
        <div className="absolute top-0 left-[992px] h-full w-[61px] bg-[#565656]" />
        <span className="absolute top-[2px] left-[1788px] text-[15px] leading-5 text-white">10:43</span>
        <div className="absolute top-0 left-[1914px] h-full w-px bg-[#aaa]" />
      </div>

      {/* dialogs stacked on the desktop */}
      <div className="absolute top-[3px] left-[1113px] flex h-[7px] w-[59px] items-center rounded-[3px] bg-[#666] pl-[2px]">
        <span className="h-[4px] w-[41px] bg-[#f83a3e]" />
      </div>
      <SystemWindow />
      <SystemProperties />
      <EnvWindow />
      <EditDialog />

      <div className="absolute top-[583px] left-[64px] flex h-[38px] w-[103px] items-center justify-center rounded-[3px] bg-[rgba(70,70,70,.85)] text-[20px] text-white">右键-属性</div>
      <Badge n="1" className="top-[591px] left-[36px]" />
      <Badge n="2" className="top-[406px] left-[229px]" />
      <Badge n="3" className="top-[733px] left-[668px]" />
      <Badge n="4" className="top-[636px] left-[907px]" />
      <Badge n="5" className="top-[161px] left-[1610px]" />
      <Badge n="6" className="top-[580px] left-[1498px]" />
    </div>
  );
}
